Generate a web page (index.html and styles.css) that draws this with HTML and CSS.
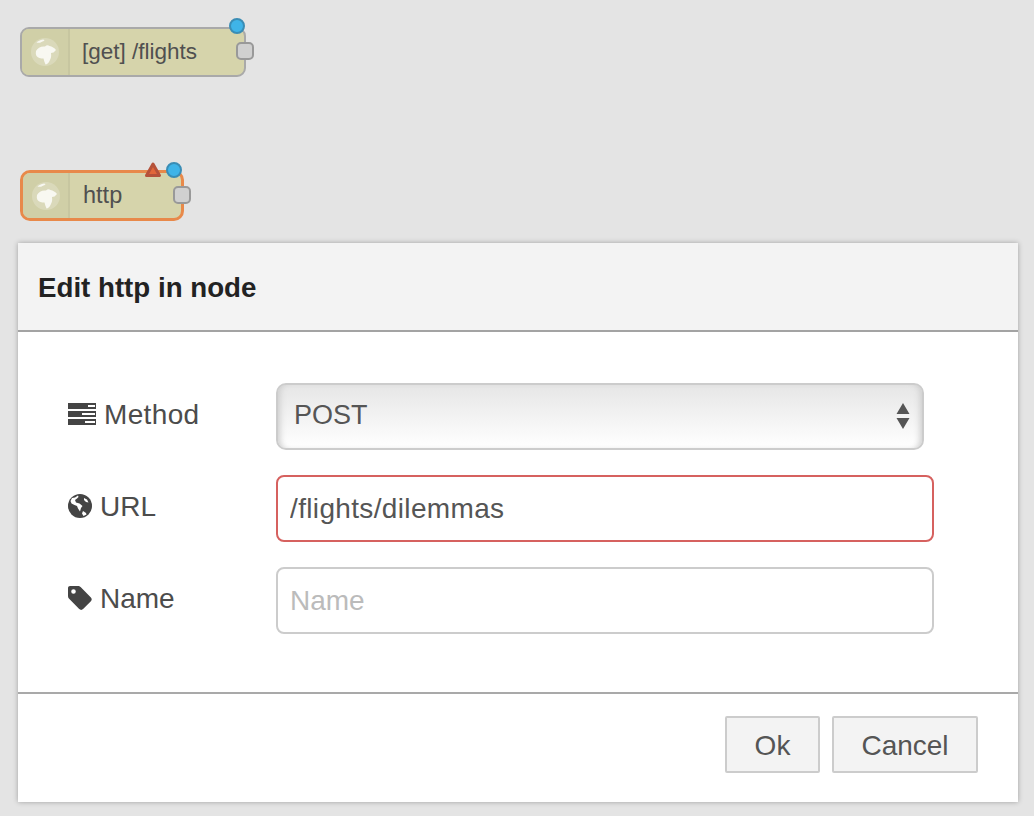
FILE: index.html
```html
<!DOCTYPE html>
<html lang="en">
<head>
    <meta charset="UTF-8">
    <title>Edit http in node</title>
    <link rel="stylesheet" href="styles.css">
</head>
<body>
    <svg class="defs" width="0" height="0">
        <symbol id="node-globe" viewBox="0 0 30 30">
            <circle cx="15" cy="15" r="14" fill="#fff" opacity="0.22"/>
            <path d="M13 2.500C10 3 8 4 6.500 5.500c1.500.5 3.500.5 5-.5 1.500-.5 2.500-1 3-2zM6 14c1.500-3 5-5 9-4.500 1.500-1.500 3-1.500 4.500-.5 2.500.5 5 2 6.500 4l-2.500 2.500-2.500.5c.5 3 0 5.500-1.500 8-1 2-2.500 3.500-4 3.500-1-2-1.500-4-2-6-3 0-5.500-.5-7-2.500-.8-1.500-.8-3-.5-5z" fill="#fff" opacity="0.8"/>
        </symbol>
    </svg>

    <div class="node node-get">
        <div class="node-icon"><svg class="node-glyph"><use href="#node-globe"/></svg></div>
        <span class="node-label">[get] /flights</span>
        <span class="node-dot"></span>
        <span class="node-port"></span>
    </div>

    <div class="node node-http">
        <div class="node-icon"><svg class="node-glyph"><use href="#node-globe"/></svg></div>
        <span class="node-label">http</span>
        <svg class="node-warn" width="20" height="18" viewBox="0 0 20 18"><path d="M10 3L16.500 14.500H3.500z" fill="#e2673a" stroke="#b5523a" stroke-width="3" stroke-linejoin="round"/></svg>
        <span class="node-dot"></span>
        <span class="node-port"></span>
    </div>

    <div class="dialog">
        <div class="dialog-title">Edit http in node</div>
        <div class="dialog-body">
            <div class="form-row">
                <label class="form-label">
                    <svg class="label-icon" width="28" height="22" viewBox="0 0 28 22">
                        <path d="M0 0h28v6H0zM0 8h28v6H0zM0 16h28v6H0z" fill="#444"/>
                        <path d="M20 2h7v2h-7zM14 10h13v2H14zM17 18h10v2H17z" fill="#fff"/>
                    </svg>
                    <span class="label-wide">Method</span>
                </label>
                <div class="select-box">
                    <span class="select-value">POST</span>
                    <svg class="select-arrows" width="14" height="26" viewBox="0 0 14 26"><path d="M7 0l6.500 11H.5zM.5 15h13L7 26z" fill="#555"/></svg>
                </div>
            </div>
            <div class="form-row">
                <label class="form-label">
                    <svg class="label-icon" width="24" height="24" viewBox="0 0 24 24">
                        <circle cx="12" cy="12" r="12" fill="#444"/>
                        <path d="M10 1.500L7 3.500l-3 .5-1.500 3 1 2.500 3 1.500 2.500 1 1 2.500 2 3 1-3.500 1.500-2-3-2.500-3.500-1-1-2.500 2-1.500 1.500-1.500zM16 4l3 1.500 1.500 3-2.500-.5-2-2zM15 17l3 2 .5 1.500-3 1.500-1.500-2.500z" fill="#fff"/>
                    </svg>
                    URL
                </label>
                <input class="text-input is-invalid" type="text" value="/flights/dilemmas">
            </div>
            <div class="form-row">
                <label class="form-label">
                    <svg class="label-icon" width="24" height="24" viewBox="0 0 24 24">
                        <path fill-rule="evenodd" d="M2 0h8c1 0 2 .4 2.600 1.100l10.300 10.300c1.100 1.100 1.100 2.800 0 3.900l-7.800 7.800c-1.100 1.100-2.800 1.100-3.900 0L.9 12.600C.3 12 0 11 0 10V2C0 .9.900 0 2 0zM5.500 3.200a2.300 2.300 0 1 0 0 4.600 2.300 2.300 0 0 0 0-4.600z" fill="#444"/>
                    </svg>
                    Name
                </label>
                <input class="text-input" type="text" placeholder="Name">
            </div>
        </div>
        <div class="dialog-footer">
            <button class="dialog-button btn-ok">Ok</button>
            <button class="dialog-button btn-cancel">Cancel</button>
        </div>
    </div>
</body>
</html>
```

FILE: styles.css
```css
body {
    margin: 0;
    width: 1034px;
    height: 816px;
    overflow: hidden;
    position: relative;
    background-color: #e4e4e4;
    font-family: "Liberation Sans", Arial, sans-serif;
    color: #555;
}
.defs {
    position: absolute;
}

/* flow nodes sit on a free canvas */
.node {
    position: absolute;
    left: 20px;
    box-sizing: border-box;
    display: flex;
    align-items: center;
    background-color: #d6d4ab;
    border: 2px solid #a9a9a9;
    border-radius: 9px;
}
.node-get {
    top: 27px;
    width: 226px;
    height: 50px;
}
.node-http {
    top: 170px;
    width: 164px;
    height: 51px;
    border: 3px solid #e8894a;
    border-radius: 10px;
}
.node-icon {
    width: 46px;
    align-self: stretch;
    display: flex;
    align-items: center;
    justify-content: center;
    background-color: #d0cfa7;
    border-right: 2px solid #c7c6a0;
    border-radius: 7px 0 0 7px;
    flex-shrink: 0;
}
.node-http .node-icon {
    width: 45px;
}
.node-glyph {
    width: 30px;
    height: 30px;
}
.node-label {
    margin-left: 12px;
    font-size: 22.5px;
    color: #505050;
}
.node-http .node-label {
    margin-left: 13px;
    font-size: 23.5px;
}
.node-dot {
    position: absolute;
    top: -11px;
    right: -1px;
    width: 12px;
    height: 12px;
    background-color: #3fb4e8;
    border: 2px solid #3a8db5;
    border-radius: 50%;
}
.node-port {
    position: absolute;
    top: 13px;
    right: -10px;
    box-sizing: border-box;
    width: 18px;
    height: 18px;
    background-color: #d0d0d0;
    border: 2px solid #999;
    border-radius: 5px;
}
.node-warn {
    position: absolute;
    top: -12px;
    right: 18px;
}

.dialog {
    position: absolute;
    left: 18px;
    top: 243px;
    width: 1000px;
    height: 559px;
    display: flex;
    flex-direction: column;
    background-color: white;
    box-shadow: 0 0 5px rgba(0, 0, 0, 0.3);
}
.dialog-title {
    box-sizing: border-box;
    height: 89px;
    padding: 28px 20px 0;
    background-color: #f3f3f3;
    border-bottom: 2px solid #a3a3a3;
    font-size: 27.7px;
    font-weight: bold;
    line-height: 34px;
    color: #222;
}
.dialog-body {
    flex: 1;
    padding: 51px 0 0 50px;
}
.form-row {
    display: flex;
    height: 66px;
    margin-bottom: 26px;
}
.form-label {
    width: 208px;
    display: flex;
    align-items: center;
    gap: 8px;
    height: 64px;
    font-size: 28px;
    color: #4c4c4c;
}
.label-wide {
    letter-spacing: 0.35px;
}
.label-icon {
    margin-top: -2px;
}
.select-box {
    box-sizing: border-box;
    width: 648px;
    height: 67px;
    padding: 0 18px 0 16px;
    display: flex;
    align-items: center;
    justify-content: space-between;
    border: 2px solid #ccc;
    border-radius: 10px;
    background: linear-gradient(#e6e6e6, #fff);
    box-shadow: inset 6px 0 6px -4px #ccc, inset -6px 0 6px -4px #ccc;
    font-size: 27px;
}
.select-value {
    margin-bottom: 2px;
}
.select-arrows {
    margin: 0 -6px 2px 0;
}
.text-input {
    box-sizing: border-box;
    width: 658px;
    height: 67px;
    padding: 0 12px;
    border: 2px solid #ccc;
    border-radius: 8px;
    font-family: "Liberation Sans", Arial, sans-serif;
    font-size: 28px;
    color: #555;
    outline: none;
}
.text-input::placeholder {
    color: #bbb;
    opacity: 1;
}
.is-invalid {
    border-color: #d6615f;
    letter-spacing: 0.35px;
}
.dialog-footer {
    box-sizing: border-box;
    height: 110px;
    padding: 22px 40px 0 0;
    display: flex;
    justify-content: flex-end;
    gap: 12px;
    border-top: 2px solid #a9a9a9;
}
.dialog-button {
    box-sizing: border-box;
    height: 57px;
    padding: 3px 0 0;
    background-color: #f3f3f3;
    border: 2px solid #ccc;
    border-radius: 2px;
    font-family: "Liberation Sans", Arial, sans-serif;
    font-size: 28px;
    color: #555;
}
.btn-ok {
    width: 95px;
}
.btn-cancel {
    width: 146px;
}
```
